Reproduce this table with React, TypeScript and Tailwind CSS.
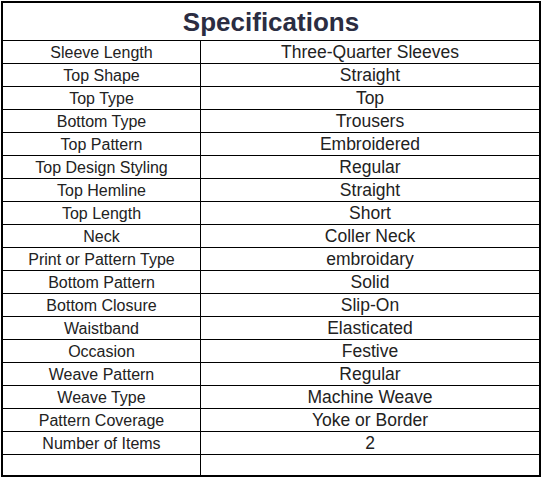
const specs: [string, string][] = [
  ["Sleeve Length", "Three-Quarter Sleeves"],
  ["Top Shape", "Straight"],
  ["Top Type", "Top"],
  ["Bottom Type", "Trousers"],
  ["Top Pattern", "Embroidered"],
  ["Top Design Styling", "Regular"],
  ["Top Hemline", "Straight"],
  ["Top Length", "Short"],
  ["Neck", "Coller Neck"],
  ["Print or Pattern Type", "embroidary"],
  ["Bottom Pattern", "Solid"],
  ["Bottom Closure", "Slip-On"],
  ["Waistband", "Elasticated"],
  ["Occasion", "Festive"],
  ["Weave Pattern", "Regular"],
  ["Weave Type", "Machine Weave"],
  ["Pattern Coverage", "Yoke or Border"],
  ["Number of Items", "2"],
];

export default function App() {
  return (
    <div className="min-h-screen bg-white pl-px pt-px font-['Liberation_Sans',Arial,sans-serif]">
      <div className="w-[540px] border-2 border-black">
        <div className="flex h-[38px] items-center justify-center border-b border-black">
          <h2 className="text-[26px] font-bold leading-none text-[#2b2d42]">
            Specifications
          </h2>
        </div>
        {specs.map(([label, value]) => (
          <div
            key={label}
            className="grid h-[23px] grid-cols-[198px_1fr] border-b border-black leading-none text-[#222]"
          >
            <div className="flex items-center justify-center border-r border-black pt-px text-[16px]">
              {label}
            </div>
            <div className="flex items-center justify-center pt-px text-[17.5px]">
              {value}
            </div>
          </div>
        ))}
        <div className="grid h-[20px] grid-cols-[198px_1fr]">
          <div className="border-r border-black" />
          <div />
        </div>
      </div>
    </div>
  );
}
